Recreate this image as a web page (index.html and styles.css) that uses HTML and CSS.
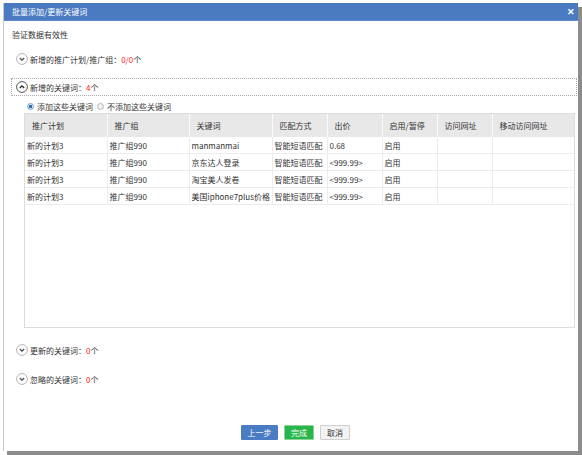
FILE: index.html
```html
<!DOCTYPE html>
<html lang="zh-CN">
<head>
    <meta charset="UTF-8">
    <title>批量添加/更新关键词</title>
    <link rel="stylesheet" href="styles.css">
</head>
<body>
    <div class="dialog">
        <div class="title-bar">
            <span>批量添加/更新关键词</span>
            <span class="close">&#10005;</span>
        </div>
        <div class="content">
            <div class="validate">验证数据有效性</div>

            <div class="section sect-first">
                <svg class="toggle" width="12" height="12" viewBox="0 0 12 12"><circle cx="6" cy="6" r="5.4" fill="#fff" stroke="#b4b4b4"/><path d="M3.8 5 L6 7.2 L8.2 5" fill="none" stroke="#444" stroke-width="1.1"/></svg>
                <span>新增的推广计划/推广组：<em>0/0</em>个</span>
            </div>

            <div class="section open-box">
                <svg class="toggle" width="12" height="12" viewBox="0 0 12 12"><circle cx="6" cy="6" r="5.4" fill="#fff" stroke="#555"/><path d="M3.8 7 L6 4.8 L8.2 7" fill="none" stroke="#222" stroke-width="1.3"/></svg>
                <span>新增的关键词：<em>4</em>个</span>
            </div>

            <div class="radios">
                <label><span class="radio checked"></span>添加这些关键词</label>
                <label><span class="radio"></span>不添加这些关键词</label>
            </div>

            <div class="table-wrap">
                <table>
                    <colgroup>
                        <col style="width:82px"><col style="width:82px"><col style="width:83px"><col style="width:55px">
                        <col style="width:55px"><col style="width:55px"><col style="width:55px"><col>
                    </colgroup>
                    <thead>
                        <tr>
                            <th>推广计划</th><th>推广组</th><th>关键词</th><th>匹配方式</th>
                            <th>出价</th><th>启用/暂停</th><th>访问网址</th><th>移动访问网址</th>
                        </tr>
                    </thead>
                    <tbody>
                        <tr><td>新的计划3</td><td>推广组990</td><td>manmanmai</td><td>智能短语匹配</td><td>0.68</td><td>启用</td><td></td><td></td></tr>
                        <tr><td>新的计划3</td><td>推广组990</td><td>京东达人登录</td><td>智能短语匹配</td><td>&lt;999.99&gt;</td><td>启用</td><td></td><td></td></tr>
                        <tr><td>新的计划3</td><td>推广组990</td><td>淘宝美人发卷</td><td>智能短语匹配</td><td>&lt;999.99&gt;</td><td>启用</td><td></td><td></td></tr>
                        <tr><td>新的计划3</td><td>推广组990</td><td>美国iphone7plus价格</td><td>智能短语匹配</td><td>&lt;999.99&gt;</td><td>启用</td><td></td><td></td></tr>
                    </tbody>
                </table>
            </div>

            <div class="section sect-updated">
                <svg class="toggle" width="12" height="12" viewBox="0 0 12 12"><circle cx="6" cy="6" r="5.4" fill="#fff" stroke="#b4b4b4"/><path d="M3.8 5 L6 7.2 L8.2 5" fill="none" stroke="#444" stroke-width="1.1"/></svg>
                <span>更新的关键词：<em>0</em>个</span>
            </div>

            <div class="section sect-ignored">
                <svg class="toggle" width="12" height="12" viewBox="0 0 12 12"><circle cx="6" cy="6" r="5.4" fill="#fff" stroke="#b4b4b4"/><path d="M3.8 5 L6 7.2 L8.2 5" fill="none" stroke="#444" stroke-width="1.1"/></svg>
                <span>忽略的关键词：<em>0</em>个</span>
            </div>

            <div class="buttons">
                <button class="btn btn-prev">上一步</button>
                <button class="btn btn-done">完成</button>
                <button class="btn btn-cancel">取消</button>
            </div>
        </div>
    </div>
</body>
</html>
```

FILE: styles.css
```css
html, body {
    margin: 0;
    padding: 0;
    background: #fff;
}
body {
    font-family: "Noto Sans CJK SC", "Noto Sans", sans-serif;
    font-size: 8px;
    color: #333;
    padding: 3px 0 0 3px;
    width: 582px;
    height: 455px;
    box-sizing: border-box;
    overflow: hidden;
}
.dialog {
    width: 575px;
    height: 448px;
    border-left: 1px solid #c8c8c8;
    box-sizing: border-box;
    background: #fff;
    box-shadow: 4px 4px 0 #8c8c8c;
}
.title-bar {
    height: 18px;
    background: #4a7bc0;
    border-bottom: 1px solid #5b8ad0;
    box-sizing: border-box;
    color: #fff;
    display: flex;
    align-items: center;
    justify-content: space-between;
    padding: 0 3px 0 8px;
}
.close {
    font-size: 9px;
    font-weight: bold;
}
.content {
    padding-left: 7px;
}
.validate {
    height: 12px;
    line-height: 12px;
    margin-top: 8px;
    padding-left: 1px;
}
.section {
    display: flex;
    align-items: center;
    height: 14px;
}
.section .toggle {
    margin: 0 2px 0 5px;
}
.section em {
    font-style: normal;
    color: #f22;
}
.sect-first {
    margin-top: 11px;
}
.open-box {
    margin-top: 12px;
    height: 18px;
    width: 566px;
    border: 1px dotted #aaa;
    box-sizing: border-box;
}
.open-box .toggle {
    margin-left: 4px;
}
.radios {
    display: flex;
    gap: 4px;
    height: 12px;
    align-items: center;
    margin: 4px 0 1px 16px;
}
.radios label {
    display: flex;
    align-items: center;
}
.radio {
    width: 7px;
    height: 7px;
    border-radius: 50%;
    border: 1px solid #b8b8b8;
    background: #f0f0f0;
    margin-right: 3px;
    box-sizing: border-box;
}
.radio.checked {
    border-color: #7aa0c8;
    background: radial-gradient(circle, #2f6fb5 0 1.6px, #dde8f4 2px);
}
.table-wrap {
    margin-left: 13px;
    width: 551px;
    height: 215px;
    border: 1px solid #dcdcdc;
    box-sizing: border-box;
}
table {
    width: 100%;
    border-collapse: collapse;
    table-layout: fixed;
}
th {
    height: 23px;
    background: #e8e8e8;
    font-weight: normal;
    text-align: left;
    padding: 0 0 0 7px;
    border-left: 1px solid #fafafa;
    color: #333;
}
th:first-child {
    border-left: none;
}
td {
    height: 16px;
    padding: 0 0 0 2px;
    border-bottom: 1px solid #ececec;
    border-left: 1px solid #ececec;
    white-space: nowrap;
    overflow: hidden;
}
td:first-child {
    border-left: none;
}
.sect-updated {
    margin-top: 15px;
}
.sect-ignored {
    margin-top: 15px;
}
.buttons {
    display: flex;
    justify-content: center;
    gap: 6px;
    margin-top: 39px;
    padding-left: 2px;
}
.btn {
    font-family: inherit;
    font-size: 8px;
    height: 15px;
    padding: 0;
    border: 1px solid transparent;
    border-radius: 1px;
    cursor: pointer;
}
.btn-prev {
    width: 37px;
    background: #4a7cc4;
    border-color: #4a7cc4;
    color: #fff;
}
.btn-done {
    width: 30px;
    background: #28b64b;
    border-color: #8fd19a;
    color: #fff;
}
.btn-cancel {
    width: 30px;
    background: #f3f3f3;
    border-color: #d0d0d0;
    color: #333;
}
```
